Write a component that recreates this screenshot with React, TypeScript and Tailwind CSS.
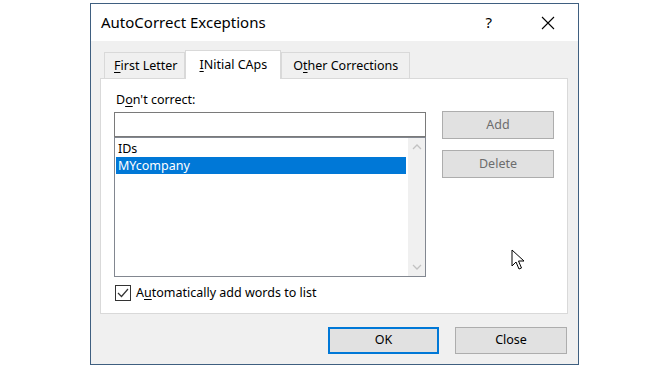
import React from 'react';

const font = { fontFamily: '"Noto Sans", "Open Sans", sans-serif' };

// ─── Small pieces ─────────────────────────────────────────────────────────────

function Key({ children }: { children: React.ReactNode }) {
    return <span className="underline underline-offset-2 decoration-1">{children}</span>;
}

function Tab({ children, active, pad = 'px-[11px]' }: { children: React.ReactNode; active?: boolean; pad?: string }) {
    if (active) {
        return (
            <div className="relative z-10 -mb-px h-[29px] px-[13px] pt-[5px] bg-white border border-b-0 border-[#d9d9d9] text-[12.5px] text-black">
                {children}
            </div>
        );
    }
    return (
        <div className={`h-[26px] ${pad} pt-[4px] bg-[#f0f0f0] border border-b-0 border-[#d9d9d9] text-[12.5px] text-black`}>
            {children}
        </div>
    );
}

function SideButton({ label }: { label: string }) {
    return (
        <div className="w-[112px] h-[28px] flex items-center justify-center bg-[#e1e1e1] border border-[#adadad] text-[12.5px] text-[#6d6d6d]">
            {label}
        </div>
    );
}

// ─── Component ────────────────────────────────────────────────────────────────

export default function App() {
    return (
        <div className="relative w-[670px] h-[370px] bg-white overflow-hidden pl-[90px] pt-[3px]" style={font}>
            <div className="w-[489px] h-[362px] border border-[#3f5f80] bg-[#f0f0f0] flex flex-col">
                {/* Title bar */}
                <div className="h-[37px] bg-white flex items-center pl-[10px] shrink-0">
                    <span className="text-[15px] text-black">AutoCorrect Exceptions</span>
                    <span className="ml-auto mr-[49px] text-[15px] text-black">?</span>
                    <svg width="14" height="14" viewBox="0 0 14 14" className="mr-[23px]">
                        <path d="M1 1 L13 13 M13 1 L1 13" stroke="#000" strokeWidth="1.1" fill="none" />
                    </svg>
                </div>

                <div className="flex-1 pl-[9px] pr-[10px] pt-[9px]">
                    {/* Tabs */}
                    <div className="flex items-end pl-[4px] h-[28px]">
                        <Tab pad="pl-[9px] pr-[7px]"><Key>F</Key>irst Letter</Tab>
                        <Tab active><Key>I</Key>Nitial CAps</Tab>
                        <Tab>O<Key>t</Key>her Corrections</Tab>
                    </div>

                    {/* Panel */}
                    <div className="h-[236px] bg-white border border-[#d9d9d9] pl-[13px] pt-[12px] flex flex-col">
                        <div className="flex">
                            <div className="w-[312px]">
                                <div className="text-[12.5px] text-black leading-[17px] pl-[2px]">
                                    D<Key>o</Key>n't correct:
                                </div>
                                <div className="mt-[4px] h-[25px] bg-white border border-[#7a7a7a]" />
                                <div className="h-[140px] border border-[#828790] flex">
                                    <div className="flex-1 pt-[2px] pl-px pr-[2px]">
                                        <div className="h-[17px] leading-[17px] text-[12.5px] text-black pl-[2px]">IDs</div>
                                        <div className="h-[17px] leading-[17px] text-[12.5px] text-white bg-[#0078d7] pl-[2px]">MYcompany</div>
                                    </div>
                                    <div className="w-[17px] bg-[#f0f0f0] flex flex-col items-center justify-between py-[6px]">
                                        <svg width="10" height="6" viewBox="0 0 10 6">
                                            <path d="M1 5 L5 1 L9 5" stroke="#c2c2c2" strokeWidth="1.3" fill="none" />
                                        </svg>
                                        <svg width="10" height="6" viewBox="0 0 10 6">
                                            <path d="M1 1 L5 5 L9 1" stroke="#c2c2c2" strokeWidth="1.3" fill="none" />
                                        </svg>
                                    </div>
                                </div>
                            </div>
                            <div className="ml-[16px] pt-[20px] flex flex-col gap-[11px]">
                                <SideButton label="Add" />
                                <SideButton label="Delete" />
                            </div>
                        </div>

                        {/* Checkbox */}
                        <div className="mt-[7px] flex items-center gap-[5px] pl-px">
                            <div className="w-[16px] h-[16px] border border-[#333] bg-white flex items-center justify-center">
                                <svg width="12" height="10" viewBox="0 0 12 10">
                                    <path d="M1 5 L4.5 8.5 L11 1" stroke="#333" strokeWidth="1.2" fill="none" />
                                </svg>
                            </div>
                            <span className="text-[12.5px] text-black">
                                A<Key>u</Key>tomatically add words to list
                            </span>
                        </div>
                    </div>

                    {/* Footer buttons */}
                    <div className="flex justify-end gap-[16px] mt-[13px] pr-px">
                        <div className="w-[111px] h-[27px] flex items-center justify-center bg-[#e1e1e1] border-2 border-[#0078d7] text-[12.5px] text-black">
                            OK
                        </div>
                        <div className="w-[112px] h-[27px] flex items-center justify-center bg-[#e1e1e1] border border-[#adadad] text-[12.5px] text-black">
                            Close
                        </div>
                    </div>
                </div>
            </div>

            {/* Mouse pointer */}
            <svg width="14" height="22" viewBox="0 0 14 22" className="absolute left-[511px] top-[249px]">
                <path d="M1 1 L1 17 L5 13 L8 20 L10.5 19 L7.5 12 L13 12 Z" fill="#fff" stroke="#000" strokeWidth="1" strokeLinejoin="round" />
            </svg>
        </div>
    );
}
